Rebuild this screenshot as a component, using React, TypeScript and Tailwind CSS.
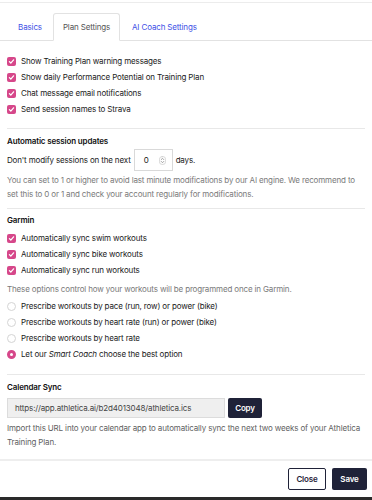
import React from 'react';

const font = { fontFamily: 'Inter, "Liberation Sans", sans-serif' };

function Check({ label }: { label: React.ReactNode }) {
  return (
    <div className="flex h-4 items-center gap-[5px]">
      <span className="flex h-[9px] w-[9px] items-center justify-center rounded-[2px] bg-[#d6478a]">
        <svg viewBox="0 0 10 10" className="h-[7px] w-[7px]" fill="none" stroke="white" strokeWidth="1.8" strokeLinecap="round" strokeLinejoin="round">
          <path d="M2 5.2l2 2 4-4.6" />
        </svg>
      </span>
      <span className="text-[#1a1a1a]">{label}</span>
    </div>
  );
}

function Radio({ label, checked }: { label: React.ReactNode; checked?: boolean }) {
  return (
    <div className="flex h-4 items-center gap-[5px]">
      {checked ? (
        <span className="h-[9px] w-[9px] rounded-full border-[3px] border-[#d6478a] bg-white" />
      ) : (
        <span className="h-[9px] w-[9px] rounded-full border border-[#d4d4d4] bg-white" />
      )}
      <span className="text-[#1a1a1a]">{label}</span>
    </div>
  );
}

export default function App() {
  return (
    <div className="relative h-[500px] w-[372px] overflow-hidden bg-white text-[8px] leading-[14px] tracking-[-0.15px]" style={font}>
      <div className="h-[3px] border-b border-[#ececec]" />

      <div className="mt-[10px] flex h-[28px] items-end border-b border-[#e2e2e2] pl-[7px]">
        <div className="flex h-[27px] w-[46px] items-center justify-center text-[#3e50e6]">Basics</div>
        <div className="-mb-px flex h-[28px] w-[67px] items-center justify-center rounded-t-[3px] border border-b-white border-[#e2e2e2] bg-white text-[#555]">Plan Settings</div>
        <div className="flex h-[27px] items-center px-[12px] text-[#3e50e6]">AI Coach Settings</div>
      </div>

      <div className="px-[7px]">
        <div className="mt-[12px]">
          <Check label="Show Training Plan warning messages" />
          <Check label="Show daily Performance Potential on Training Plan" />
          <Check label="Chat message email notifications" />
          <Check label="Send session names to Strava" />
        </div>

        <div className="mt-[11px] border-t border-[#e8e8e8]" />
        <div className="mt-[5px] font-semibold text-[#111]">Automatic session updates</div>
        <div className="mt-px flex h-[22px] items-center text-[#1a1a1a]">
          <span>Don't modify sessions on the next</span>
          <div className="ml-[3px] flex h-[22px] w-[39px] items-center border border-[#d9d9d9] pl-[9px] pr-[6px]">
            <span className="flex-1">0</span>
            <svg viewBox="0 0 8 10" className="h-[9px] w-[7px]" fill="none" stroke="#888" strokeWidth="0.9" strokeLinecap="round" strokeLinejoin="round">
              <rect x="0.5" y="0.5" width="7" height="9" rx="3" stroke="#cfcfcf" />
              <path d="M2.5 4l1.5-1.5L5.5 4" />
              <path d="M2.5 6l1.5 1.5L5.5 6" />
            </svg>
          </div>
          <span className="ml-[3px]">days.</span>
        </div>
        <p className="mt-[2px] text-[#7a7a7a]">
          You can set to 1 or higher to avoid last minute modifications by our AI engine. We recommend to set this to 0 or 1 and check your account regularly for modifications.
        </p>

        <div className="mt-[7px] border-t border-[#e8e8e8]" />
        <div className="mt-[4px] font-semibold text-[#111]">Garmin</div>
        <div className="mt-[3px]">
          <Check label="Automatically sync swim workouts" />
          <Check label="Automatically sync bike workouts" />
          <Check label="Automatically sync run workouts" />
        </div>
        <p className="mt-[4px] text-[#7a7a7a]">These options control how your workouts will be programmed once in Garmin.</p>
        <div className="mt-[2px]">
          <Radio label="Prescribe workouts by pace (run, row) or power (bike)" />
          <Radio label="Prescribe workouts by heart rate (run) or power (bike)" />
          <Radio label="Prescribe workouts by heart rate" />
          <Radio checked label={<>Let our <i>Smart Coach</i> choose the best option</>} />
        </div>

        <div className="mt-[12px] border-t border-[#e8e8e8]" />
        <div className="mt-[5px] font-semibold text-[#111]">Calendar Sync</div>
        <div className="mt-[4px] flex h-[20px] gap-[3px]">
          <div className="flex w-[218px] items-center border border-[#dcdcdc] bg-[#efefef] pl-[7px] text-[#444]">
            https://app.athletica.ai/b2d4013048/athletica.ics
          </div>
          <button className="flex w-[34px] items-center justify-center rounded-[2px] bg-[#1f2238] font-semibold text-white">Copy</button>
        </div>
        <p className="mt-[3px] text-[#5f5f5f]">
          Import this URL into your calendar app to automatically sync the next two weeks of your Athletica Training Plan.
        </p>
      </div>

      <div className="mt-[10px] h-[2px] bg-[#eeeeee]" />
      <div className="mt-[7px] flex justify-end gap-[6px] pr-[5px]">
        <button className="h-[22px] w-[38px] rounded-[2px] border border-[#1f2238] bg-white font-semibold text-[#1f2238]">Close</button>
        <button className="h-[22px] w-[35px] rounded-[2px] bg-[#1f2238] font-semibold text-white">Save</button>
      </div>

      <div className="absolute bottom-0 left-0 h-[3px] w-full bg-[#2a2a2a]" />
    </div>
  );
}
